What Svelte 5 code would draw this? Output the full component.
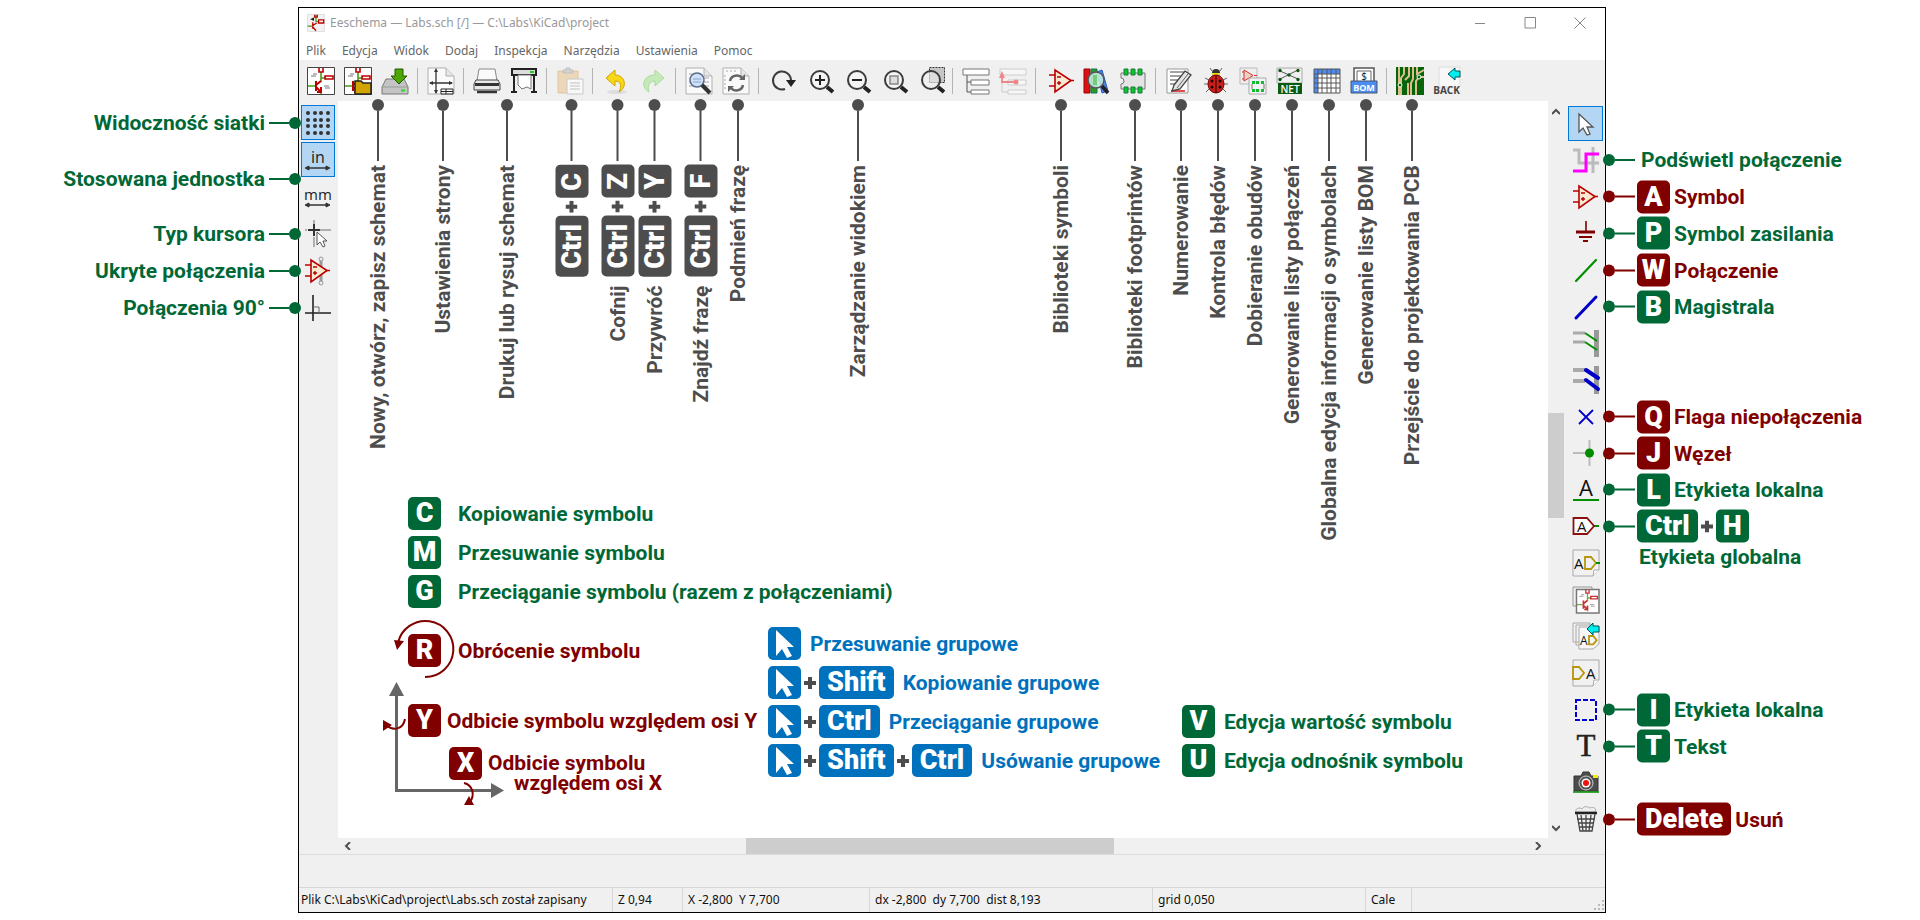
<script>
  const paper = '<path d="M1 1H19L27 9V27H1Z" fill="#fafafa" stroke="#b0b0b0"/><path d="M19 1V9H27" fill="#e6e6e6" stroke="#b0b0b0"/>';
  const circuit =
    '<path d="M14 5V15M14 11H19M1 19H8M14 23V27" fill="none" stroke="#4a9a1a" stroke-width="1.600"/>' +
    '<path d="M12 1V5H16V1M18 9H26V12H18Z" fill="none" stroke="#b00" stroke-width="1.600"/>' +
    '<path d="M9 14V24M9 18L14 14M9 20L13 24M10 25H14V20" fill="none" stroke="#b00" stroke-width="2"/>' +
    '<path d="M6 7H10M4 9H9M17 19H22M18 21H23" stroke="#777"/>';
  const lens = (cx = 15, cy = 13) =>
    `<circle cx="${cx}" cy="${cy}" r="9" fill="#f4f4f4" stroke="#3c3c3c" stroke-width="2"/><path d="M${cx + 7} ${cy + 7}L${cx + 13} ${cy + 12}" stroke="#222" stroke-width="4"/>`;
  const amp =
    '<path d="M1 8H7M1 19H7M22 13.500H26" stroke="#b00" stroke-width="1.600"/><path d="M7 3V25L23 13.500Z" fill="#f7ead0" stroke="#b00" stroke-width="1.600"/><path d="M9 10H13M9 16H13M11 14V18" stroke="#b00" stroke-width="1.400"/>';
  const plug = '<path d="M1 1H27V21L21 27H1Z" fill="#f1f1f1" stroke="#a9a9a9"/><path d="M27 21H22L21 27" fill="#fff" stroke="#a9a9a9"/>';
  const gate = (x, y, s = 1) =>
    `<path d="M${x} ${y}h${6 * s}l${5 * s} ${6 * s}l${-5 * s} ${6 * s}h${-6 * s}Z" fill="none" stroke="#b8960c" stroke-width="1.800"/>`;
  const letter = (x, y, size, t = 'A') =>
    `<text x="${x}" y="${y}" font-family="Open Sans, sans-serif" font-size="${size}" fill="#111">${t}</text>`;
  const arrow = '<path d="M1 22L5 20V24ZM26 22L22 20V24Z" fill="#333" stroke="#333"/><path d="M3 22H24" stroke="#333" stroke-width="1.500"/>';

  const icons = {
    new: '<path d="M.5.5H27.500V27.500H.5Z" fill="#fff" stroke="#444"/>' + circuit,
    open: '<path d="M.5.5H27.500V27.500H.5Z" fill="#fff" stroke="#444"/>' + circuit + '<path d="M11 27V14H17L19 16H27V27Z" fill="#d2a400" stroke="#222" stroke-width="1.500"/>',
    save: '<path d="M5 12H23L27 20V27H1V20Z" fill="#c4c4c4" stroke="#777"/><path d="M1 20H27" stroke="#999"/><path d="M20 23.500H24" stroke="#2d2" stroke-width="2"/><path d="M14 2H22V9H26L18 17L10 9H14Z" fill="#4ea604" stroke="#225a00"/>',
    page: paper + '<path d="M9 3V26M3 16H25" stroke="#333" stroke-width="1.300"/><path d="M9 1L7 5H11ZM9 27L7 23H11ZM2 16L6 14V18ZM26 16L22 14V18Z" fill="#333"/><path d="M14 22H26V27H14ZM19 22V27M14 24.500H26" fill="#fff" stroke="#222"/>',
    print: '<path d="M6 2H22L24 14H4Z" fill="#fafafa" stroke="#888"/><path d="M3 13H25L27 17V23H1V17Z" fill="#e8e8e8" stroke="#444"/><path d="M2 16H26V19H2Z" fill="#333"/><path d="M4 25H24" stroke="#333" stroke-width="2.500"/>',
    plot: '<path d="M2 2H26V8H2Z" fill="#ddd" stroke="#222" stroke-width="2"/><path d="M20 5H24" stroke="#2c2" stroke-width="2"/><path d="M8 8H21V22L17 20L12 22L8 18Z" fill="#fff" stroke="#777"/><path d="M4 8V25M24 8V25M1 25H7M21 25H27" stroke="#222" stroke-width="2"/>',
    paste: '<g opacity=".55"><path d="M2 4H22V26H2Z" fill="#e9c38b" stroke="#d6a35d"/><path d="M7 6V3H10V1H14V3H17V6Z" fill="#bbb" stroke="#999"/><path d="M11 12H27V27H11Z" fill="#fff" stroke="#aaa"/><path d="M14 16H24M14 19H24M14 22H24" stroke="#999"/></g>',
    undo: '<ellipse cx="15" cy="25" rx="10" ry="2" fill="#ddd"/><path d="M4 11L13 3V8C23 8 26 20 17 25C20 19 19 14 13 14V19Z" fill="#f6d816" stroke="#d0a400"/>',
    redo: '<g opacity=".55"><path d="M25 11L16 3V8C4 8 1 20 10 25C8 19 10 14 16 14V19Z" fill="#a3e58b" stroke="#6fcf52"/></g>',
    find: paper + '<path d="M4 7H16M4 11H24M4 15H24M4 19H24" stroke="#aaa"/><circle cx="12" cy="13" r="7" fill="#cfe0f7" stroke="#5a6c8c" stroke-width="1.500"/><path d="M8 12H16M8 15H16" stroke="#8aa3cf"/><path d="M17 18L25 26" stroke="#333" stroke-width="4"/>',
    replace: paper + '<path d="M4 4H16M3 8V24" stroke="#aaa" stroke-dasharray="2 2"/><path d="M8 14C9 8 17 7 20 11M21 18C20 24 12 25 9 21" fill="none" stroke="#666" stroke-width="2.500"/><path d="M17 13H23V7ZM12 19H6V25Z" fill="#666"/>',
    refresh: '<path d="M17 22A9 9 0 1 1 23 13" fill="none" stroke="#3c3c3c" stroke-width="2"/><path d="M18 13H28L23 20Z" fill="#222"/>',
    zoomIn: lens() + '<path d="M10 13H20M15 8V18" stroke="#222" stroke-width="2"/>',
    zoomOut: lens() + '<path d="M10 13H20" stroke="#222" stroke-width="2"/>',
    zoomFit: lens() + '<path d="M11 9H19V17H11Z" fill="#ddd" stroke="#888" stroke-width="1.500"/>',
    zoomArea: '<path d="M13.500.5H28.500V15.500H13.500Z" fill="#c6c6c6" stroke="#333" stroke-dasharray="2 1"/><circle cx="15" cy="13" r="9" fill="#eee" fill-opacity=".6" stroke="#3c3c3c" stroke-width="2"/><path d="M22 20L28 25" stroke="#222" stroke-width="4"/>',
    tree: '<path d="M5 8V25H9M5 15H9" fill="none" stroke="#555"/><path d="M1 2H27V8H1ZM9 13H27V18H9ZM9 23H27V27H9Z" fill="#fff" stroke="#777"/>',
    treeUp: '<g opacity=".5"><path d="M3 8V25H9M5 15H9" fill="none" stroke="#aaa"/><path d="M1 2H27V8H1ZM9 13H27V18H9ZM9 23H27V27H9Z" fill="#fff" stroke="#aaa"/><path d="M3 8V15H17" fill="none" stroke="#e22" stroke-width="1.800"/><path d="M0 11L3 4L6 11Z" fill="#e22"/><circle cx="17" cy="15" r="2.500" fill="#e22"/></g>',
    amp,
    symbols: '<g transform="translate(3 0)">' + amp + '</g>',
    library: '<path d="M2 2H8V26H2Z" fill="#d11" stroke="#900"/><path d="M9 2H15V26H9Z" fill="#2a9a1a" stroke="#176"/><path d="M15 5L20 3L26 24L20 26Z" fill="#4b86e8" stroke="#25b"/><circle cx="14" cy="13" r="8" fill="#c9efe4" fill-opacity=".85" stroke="#555" stroke-width="1.500"/><path d="M11 8H15V18H11Z" fill="#7c7"/><path d="M20 19L26 26" stroke="#222" stroke-width="3.500"/>',
    footprint: '<path d="M2 6H26V22H2V17A3 3 0 0 0 2 11Z" fill="#e4e4e4" stroke="#777"/><path d="M5 2H9V8H5ZM12 2H16V8H12ZM19 2H23V8H19ZM5 20H9V26H5ZM12 20H16V26H12ZM19 20H23V26H19Z" fill="#0c2" stroke="#274"/>',
    annotate: '<path d="M2 2H23V26H2Z" fill="#fff" stroke="#999"/><path d="M5 5H20M5 9H18M5 13H15M5 17H12" stroke="#444"/><path d="M6 24H20" stroke="#d11" stroke-width="1.500"/><path d="M9 18L20 4L26 8L15 22L7 24Z" fill="#e4e4e4" stroke="#444" stroke-width="1.300"/><path d="M12 21L23 7" stroke="#666"/>',
    bug: '<path d="M3 11L7 13M2 17H7M4 25L8 21M25 11L21 13M26 17H21M24 25L20 21M10 4L8 1M18 4L20 1" fill="none" stroke="#666"/><circle cx="14" cy="6" r="4" fill="#333"/><path d="M10 7H18" stroke="#dd2" stroke-width="2"/><ellipse cx="14" cy="17" rx="8" ry="9" fill="#c8201c" stroke="#700"/><path d="M14 9V26" stroke="#300"/><g fill="#200"><circle cx="10" cy="14" r="1.500"/><circle cx="18" cy="14" r="1.500"/><circle cx="10" cy="20" r="1.500"/><circle cx="18" cy="20" r="1.500"/></g>',
    assign: '<path d="M1 1H18V17H1Z" fill="#eee" stroke="#bbb"/><path d="M3 5H5M3 12H5M5 3V14L14 8.500Z" fill="#f2d0c0" stroke="#c33"/><path d="M15 8.500H18" stroke="#c33"/><path d="M10 11H27V27H10Z" fill="#f3f3f3" stroke="#aaa"/><path d="M13 14H16V17H13ZM17 14H20V17H17ZM22 14H25V17H22ZM13 22H16V25H13ZM17 22H20V25H17ZM22 22H25V25H22Z" fill="#1b3"/><path d="M13 17V22M25 17V22" stroke="#777"/>',
    net: '<path d="M1 1H26V16H1Z" fill="#f0f0f0" stroke="#aaa"/><path d="M4 4L22 12M22 3L4 12" stroke="#555"/><g fill="#151"><circle cx="4" cy="3.500" r="1.700"/><circle cx="22" cy="3.500" r="1.700"/><circle cx="13" cy="8" r="1.700"/><circle cx="4" cy="12.500" r="1.700"/><circle cx="22" cy="12.500" r="1.700"/></g><path d="M2 16H26V27H2Z" fill="#0a5c12"/><text x="14" y="25.500" text-anchor="middle" font-family="Open Sans, sans-serif" font-weight="600" font-size="10" fill="#fff">NET</text>',
    table: '<path d="M1 2H27V26H1Z" fill="#fff"/><path d="M1 2H27V7H5V26H1Z" fill="#4c8df5"/><path d="M1 2H27V26H1ZM5 2V26M9 2V26M14 2V26M18 2V26M23 2V26M1 7H27M1 11H27M1 16H27M1 21H27" fill="none" stroke="#555"/>',
    bom: '<path d="M4 1H24V16H4Z" fill="#fff" stroke="#555" stroke-width="1.500"/><path d="M7 4H21V16H7Z" fill="#fff" stroke="#666"/><text x="14" y="13" text-anchor="middle" font-family="Open Sans, sans-serif" font-size="10" fill="#111">$</text><path d="M1 14H27V26H1Z" fill="#4c8df5" stroke="#456"/><text x="14" y="24" text-anchor="middle" font-family="Open Sans, sans-serif" font-weight="700" font-size="9" fill="#fff">BOM</text>',
    pcb: '<path d="M0 0H28V28H0Z" fill="#06650a"/><path d="M3 0V28M8 0V7L5 11V28M13 0V9L9 13M12 16V28M17 0V12L15 16V28M21 0V7L28 3M28 10H23L20 14V28" fill="none" stroke="#dcbf8a" stroke-width="2"/><circle cx="4" cy="18" r="2" fill="#06650a" stroke="#fff"/><circle cx="23" cy="10" r="2" fill="#06650a" stroke="#fff"/>',
    back: '<path d="M6 0H27V20H6Z" fill="#f7f7f7" stroke="#ddd"/><path d="M15 7L22 1V4H27V10H22V13Z" fill="#0ee" stroke="#055"/><text x="13.500" y="27" text-anchor="middle" font-family="Open Sans, sans-serif" font-weight="700" font-size="10" fill="#444">BACK</text>',
    grid: '<g fill="#333">' + [4, 11, 17, 24].flatMap((y) => [4, 11, 17, 24].map((x) => `<circle cx="${x}" cy="${y}" r="2"/>`)).join('') + '</g>',
    inch: '<text x="14" y="17" text-anchor="middle" font-family="Open Sans, sans-serif" font-size="16" fill="#222">in</text>' + arrow,
    mm: '<text x="14" y="17" text-anchor="middle" font-family="Open Sans, sans-serif" font-size="15" fill="#222">mm</text>' + arrow,
    cursor: '<path d="M10 0V4M10 17V27M1 10H3M16 10H27" stroke="#999" stroke-width="1.500"/><path d="M10 4V16M4 10H16" stroke="#333" stroke-width="2"/><path d="M13 12V25L16 22L19 27L21 26L19 21H23Z" fill="#fff" stroke="#555"/>',
    hidden: '<path d="M17 3V25" stroke="#999" stroke-width="3"/><circle cx="17" cy="2" r="2" fill="#eee" stroke="#999"/><circle cx="17" cy="26" r="2" fill="#eee" stroke="#999"/>' + amp,
    right: '<path d="M9 1V27M1 19H27" stroke="#222" stroke-width="1.600"/><path d="M9 13H15V19" fill="none" stroke="#666"/>',
    pointer: '<path d="M7 4V22L11 18L15 25L18 24L15 17H21Z" fill="#fff" stroke="#555" stroke-width="1.300"/>',
    highlight: '<path d="M1 4H7V17H27M21 1V27" fill="none" stroke="#bbb" stroke-width="3"/><path d="M1 25H14V8H27" fill="none" stroke="#f0f" stroke-width="3"/>',
    power: '<path d="M14 2V13" stroke="#800000" stroke-width="1.600"/><path d="M4 13H23" stroke="#800000" stroke-width="3"/><path d="M7 18H20M11 22H16" stroke="#800000" stroke-width="2"/>',
    wire: '<path d="M4 25L24 4" stroke="#009000" stroke-width="2.200" stroke-linecap="round"/>',
    bus: '<path d="M4 25L24 4" stroke="#0000c8" stroke-width="3" stroke-linecap="round"/>',
    wireEntry: '<path d="M1 4H13M1 13H13" stroke="#aaa" stroke-width="3"/><path d="M24.500 1V28" stroke="#999" stroke-width="5"/><path d="M13 4L25 12M13 13L25 21" stroke="#009000" stroke-width="2"/>',
    busEntry: '<path d="M1 4H13M1 15H13" stroke="#aaa" stroke-width="4"/><path d="M24.500 0V28" stroke="#999" stroke-width="5"/><path d="M14 4L26 12M14 14L26 23" stroke="#0000c8" stroke-width="4" stroke-linecap="round"/>',
    noConnect: '<path d="M7 7L21 21M21 7L7 21" stroke="#0000c8" stroke-width="1.800"/>',
    junction: '<path d="M1 14H17M17.500 1V27" stroke="#bbb" stroke-width="2"/><circle cx="17.500" cy="14" r="4.500" fill="#008c00"/>',
    label: '<path d="M1 24H27" stroke="#009000" stroke-width="2"/>' + letter(7, 20, 22),
    global: '<path d="M20 14H27" stroke="#009000" stroke-width="2"/><path d="M1.500 6H15L22 14L15 22H1.500Z" fill="#fff" stroke="#8a1010" stroke-width="1.800"/>' + letter(5, 20, 15),
    hier: plug + gate(13, 8) + '<path d="M24 14H28" stroke="#009000" stroke-width="2"/>' + letter(2, 20, 15),
    sheet: '<path d="M1 1H20V20H1Z" fill="#eee" stroke="#999"/><path d="M4.500 3.500H27V27H4.500Z" fill="#fff" stroke="#777" stroke-width="1.500"/><g transform="translate(4 3) scale(.82)" opacity=".8">' + circuit + '</g>',
    sheetImport: '<path d="M1 1H18V20H1ZM4 3H21V23H4Z" fill="#f2f2f2" stroke="#aaa"/><path d="M7 5H27V22L21 27H7Z" fill="#f7f7f7" stroke="#aaa"/><path d="M15 7L21 1V4H27V10H21V13Z" fill="#0ee" stroke="#055"/>' + gate(17, 14, 0.7) + letter(8, 23, 12),
    sheetPin: plug + gate(1, 8) + letter(14, 20, 15),
    outline: '<path d="M4 4H24V24H4Z" fill="none" stroke="#0000d0" stroke-width="2" stroke-dasharray="5 2"/>',
    text: '<text x="14" y="24" text-anchor="middle" font-family="Liberation Serif, serif" font-size="31" fill="#222" stroke="#222" stroke-width=".5">T</text>',
    image: '<path d="M2 7H9L11 3H17L19 7H26V22H2Z" fill="#4c4c4c" stroke="#333"/><path d="M21 6H26V9H21Z" fill="#ee0"/><circle cx="14" cy="14" r="7" fill="#555" stroke="#ccc"/><circle cx="14" cy="14" r="4.500" fill="#fff"/><circle cx="14" cy="14" r="3" fill="#e11"/><path d="M1 23H27" stroke="#009000" stroke-width="1.500"/>',
    trash: '<path d="M4 7C3 3 8 2 10 4C13 0 16 2 18 3C23 1 25 5 23 7Z" fill="#eee" stroke="#aaa"/><path d="M3 8H25" stroke="#222" stroke-width="2.500"/><path d="M5 9L8 26H20L23 9M9 10L11 26M14 10V26M19 10L17 26M5 14H23M6 18H22M7 22H21" fill="none" stroke="#444" stroke-width="1.300"/>'
  };

  const draw = (name) => `<svg width="28" height="28" viewBox="0 0 28 28" overflow="visible" font-weight="400" aria-hidden="true">${icons[name]}</svg>`;

  const menus = ['Plik', 'Edycja', 'Widok', 'Dodaj', 'Inspekcja', 'Narzędzia', 'Ustawienia', 'Pomoc'];

  const top = [
    { icon: 'new' }, { icon: 'open' }, { icon: 'save', text: 'Nowy, otwórz, zapisz schemat', between: true }, null,
    { icon: 'page', text: 'Ustawienia strony' }, null,
    { icon: 'print' }, { icon: 'plot', text: 'Drukuj lub rysuj schemat', between: true }, null,
    { icon: 'paste', keys: ['Ctrl', 'C'] }, null,
    { icon: 'undo', keys: ['Ctrl', 'Z'], text: 'Cofnij' }, { icon: 'redo', keys: ['Ctrl', 'Y'], text: 'Przywróć' }, null,
    { icon: 'find', keys: ['Ctrl', 'F'], text: 'Znajdź frazę' }, { icon: 'replace', text: 'Podmień frazę' }, null,
    { icon: 'refresh' }, { icon: 'zoomIn' }, { icon: 'zoomOut', text: 'Zarządzanie widokiem' }, { icon: 'zoomFit' }, { icon: 'zoomArea' }, null,
    { icon: 'tree' }, { icon: 'treeUp' }, null,
    { icon: 'symbols', text: 'Biblioteki symboli' }, { icon: 'library' }, { icon: 'footprint', text: 'Biblioteki footprintów' }, null,
    { icon: 'annotate', text: 'Numerowanie' }, { icon: 'bug', text: 'Kontrola błędów' }, { icon: 'assign', text: 'Dobieranie obudów' },
    { icon: 'net', text: 'Generowanie listy połączeń' }, { icon: 'table', text: 'Globalna edycja informacji o symbolach' }, { icon: 'bom', text: 'Generowanie listy BOM' }, null,
    { icon: 'pcb', text: 'Przejście do projektowania PCB' }, { icon: 'back' }
  ];

  const left = [
    { icon: 'grid', text: 'Widoczność siatki', on: true },
    { icon: 'inch', on: true },
    { icon: 'mm', text: 'Stosowana jednostka', between: true },
    { icon: 'cursor', text: 'Typ kursora' },
    { icon: 'hidden', text: 'Ukryte połączenia' },
    { icon: 'right', text: 'Połączenia 90°' }
  ];

  const right = [
    { icon: 'pointer', on: true },
    { icon: 'highlight', text: 'Podświetl połączenie', tone: 'green' },
    { icon: 'amp', keys: ['A'], text: 'Symbol', tone: 'red' },
    { icon: 'power', keys: ['P'], text: 'Symbol zasilania', tone: 'green' },
    { icon: 'wire', keys: ['W'], text: 'Połączenie', tone: 'red' },
    { icon: 'bus', keys: ['B'], text: 'Magistrala', tone: 'green' },
    { icon: 'wireEntry' }, { icon: 'busEntry' },
    { icon: 'noConnect', keys: ['Q'], text: 'Flaga niepołączenia', tone: 'red' },
    { icon: 'junction', keys: ['J'], text: 'Węzeł', tone: 'red' },
    { icon: 'label', keys: ['L'], text: 'Etykieta lokalna', tone: 'green' },
    { icon: 'global', keys: ['Ctrl', 'H'], below: 'Etykieta globalna', tone: 'green' },
    { icon: 'hier' }, { icon: 'sheet' }, { icon: 'sheetImport' }, { icon: 'sheetPin' },
    { icon: 'outline', keys: ['I'], text: 'Etykieta lokalna', tone: 'green' },
    { icon: 'text', keys: ['T'], text: 'Tekst', tone: 'green' },
    { icon: 'image' },
    { icon: 'trash', keys: ['Delete'], text: 'Usuń', tone: 'red' }
  ];

  const copy = [['C', 'Kopiowanie symbolu'], ['M', 'Przesuwanie symbolu'], ['G', 'Przeciąganie symbolu (razem z połączeniami)']];
  const group = [
    [[], 'Przesuwanie grupowe'],
    [['Shift'], 'Kopiowanie grupowe'],
    [['Ctrl'], 'Przeciąganie grupowe'],
    [['Shift', 'Ctrl'], 'Usówanie grupowe']
  ];
  const edit = [['V', 'Edycja wartość symbolu'], ['U', 'Edycja odnośnik symbolu']];
</script>

{#snippet plus()}
  <svg width="12" height="12" viewBox="0 0 12 12" role="img" aria-label="plus"><path d="M6 0V12M0 6H12" stroke="#4d4d4d" stroke-width="4" /></svg>
{/snippet}

{#snippet key(k)}<kbd class:word={k.length > 1}>{k}</kbd>{/snippet}

{#snippet chord(keys)}
  <span class="chord">
    {#each keys as k, i}
      {#if i}{@render plus()}{/if}{@render key(k)}
    {/each}
  </span>
{/snippet}

<div class="page">
  <main class="window">
    <header class="title">
      <svg width="18" height="18" viewBox="0 0 28 28" aria-hidden="true"><rect x=".5" y=".5" width="27" height="27" rx="2" fill="#f2f2f2" stroke="#ccc" /><path d="M14 1V12H18M1 19H8" stroke="#4a9a1a" stroke-width="2" fill="none" /><path d="M12 1V5H16V1M18 9H26V14H18ZM9 13V23M9 18L15 14M9 20L14 26" stroke="#b00" stroke-width="2" fill="none" /><path d="M5 8L11 5V11Z" fill="#222" /></svg>
      <h1>Eeschema — Labs.sch [/] — C:\Labs\KiCad\project</h1>
      <div class="controls">
        <button aria-label="Minimalizuj"><svg width="12" height="12" viewBox="0 0 12 12"><path d="M1 6.500H11" stroke="#888" /></svg></button>
        <button aria-label="Maksymalizuj"><svg width="12" height="12" viewBox="0 0 12 12"><path d="M1 .5H11.500V11H1Z" fill="none" stroke="#888" /></svg></button>
        <button aria-label="Zamknij"><svg width="12" height="12" viewBox="0 0 12 12"><path d="M.5.5L11.500 11.500M11.500.5L.5 11.500" stroke="#888" /></svg></button>
      </div>
    </header>

    <nav class="menu">
      {#each menus as m}<button>{m}</button>{/each}
    </nav>

    <div class="toolbar top">
      {#each top as t}
        {#if t}
          <div class="tool">
            <button aria-label={t.text ?? t.icon}>{@html draw(t.icon)}</button>
            {#if t.text || t.keys}
              <div class="callout down" class:between={t.between}>
                <i class="dot"></i><i class="line"></i>
                <div class="upright">
                  {#if t.text}<span>{t.text}</span>{/if}
                  {#if t.keys}{@render chord(t.keys)}{/if}
                </div>
              </div>
            {/if}
          </div>
        {:else}
          <i class="sep"></i>
        {/if}
      {/each}
    </div>

    <div class="body">
      <div class="toolbar side">
        {#each left as t}
          <div class="tool">
            <button class:on={t.on} aria-label={t.text ?? t.icon}>{@html draw(t.icon)}</button>
            {#if t.text}
              <div class="callout west green" class:between={t.between}><span>{t.text}</span><i class="line"></i><i class="dot"></i></div>
            {/if}
          </div>
        {/each}
      </div>

      <div class="view">
        <section class="canvas">
          <div class="col">
            <svg class="axes" width="140" height="200" viewBox="0 0 140 200" aria-hidden="true">
              <path d="M18.500 80V182.500H116" fill="none" stroke="#666" stroke-width="3" />
              <path d="M18.500 74L26 88H11ZM126 182.500L113 175V190Z" fill="#666" />
              <g fill="none" stroke="#800000" stroke-width="2">
                <path d="M47 69A28 28 0 1 0 20 35" />
                <path d="M27 111C25 122 15 123 8 117" />
                <path d="M86 175C95 177 97 187 92 194" />
              </g>
              <path d="M16 32L26 33L19 42ZM5 112V123L14 117ZM86 197L91 188L96 197Z" fill="#800000" />
            </svg>
            <div class="list green">
              {#each copy as [k, text]}<div class="entry wide">{@render key(k)}<span>{text}</span></div>{/each}
            </div>
            <div class="red rotate">
              <div class="entry wide">{@render key('R')}<span>Obrócenie symbolu</span></div>
              <div class="entry flip-y">{@render key('Y')}<span>Odbicie symbolu względem osi Y</span></div>
              <div class="entry flip-x">{@render key('X')}<p>Odbicie symbolu<br /><span class="second">względem osi X</span></p></div>
            </div>
          </div>
          <div class="col list blue">
            {#each group as [keys, text]}
              <div class="entry">
                <span class="chord">
                  <kbd class="mouse"><svg width="20" height="28" viewBox="0 0 20 28" role="img" aria-label="Mysz"><path d="M1 0V26L7 19L12 28L17 26L12 17H19Z" fill="#fff" /></svg></kbd>
                  {#each keys as k}{@render plus()}{@render key(k)}{/each}
                </span>
                <span>{text}</span>
              </div>
            {/each}
          </div>
          <div class="col list green">
            {#each edit as [k, text]}<div class="entry">{@render key(k)}<span>{text}</span></div>{/each}
          </div>
        </section>
        <div class="scroll vertical">
          <svg width="8" height="8" viewBox="0 0 8 8"><path d="M0 6L4 2L8 6" /></svg>
          <i class="thumb"></i>
          <svg width="8" height="8" viewBox="0 0 8 8"><path d="M0 2L4 6L8 2" /></svg>
        </div>
        <div class="scroll horizontal">
          <svg width="8" height="8" viewBox="0 0 8 8"><path d="M6 0L2 4L6 8" /></svg>
          <i class="thumb"></i>
          <svg width="8" height="8" viewBox="0 0 8 8"><path d="M2 0L6 4L2 8" /></svg>
        </div>
      </div>

      <div class="toolbar side spread">
        {#each right as t}
          <div class="tool">
            <button class:on={t.on} aria-label={t.text ?? t.below ?? t.icon}>{@html draw(t.icon)}</button>
            {#if t.tone}
              <div class="callout east {t.tone}">
                <i class="dot"></i><i class="line"></i>
                {#if t.keys}{@render chord(t.keys)}{/if}
                {#if t.text}<span class="name">{t.text}</span>{/if}
                {#if t.below}<span class="below">{t.below}</span>{/if}
              </div>
            {/if}
          </div>
        {/each}
      </div>
    </div>

    <div class="messages"></div>

    <footer class="status">
      <span>Plik C:\Labs\KiCad\project\Labs.sch został zapisany</span>
      <span>Z 0,94</span>
      <span>X -2,800&nbsp; Y 7,700</span>
      <span>dx -2,800&nbsp; dy 7,700&nbsp; dist 8,193</span>
      <span>grid 0,050</span>
      <span>Cale</span>
      <span class="grip"><svg width="12" height="12" viewBox="0 0 12 12" aria-hidden="true"><path d="M9 1H11M5 5H7M9 5H11M1 9H3M5 9H7M9 9H11" stroke="#bbb" stroke-width="2" /></svg></span>
    </footer>
  </main>
</div>

<style>
  :global(body) { margin: 0; background: #fff; }
  .page {
    display: grid;
    grid-template-columns: minmax(0, 1fr);
    box-sizing: border-box;
    min-height: 100vh;
    padding: 7px 314px 7px 298px;
    overflow: hidden;
    font: 700 21px/24px Roboto, sans-serif;
    color: #4d4d4d;
  }
  button { display: flex; align-items: center; justify-content: center; margin: 0; padding: 0; border: 0; background: none; font: inherit; color: inherit; }
  svg { display: block; flex: none; }
  i { display: block; flex: none; }
  p { margin: 0; line-height: 20px; }

  .window { display: flex; flex-direction: column; border: 1px solid #000; background: #f0f0f0; }
  .title, .menu, .status { font: 400 12px/16px "Noto Sans", "Open Sans", sans-serif; }
  .title { display: flex; align-items: center; gap: 5px; height: 30px; padding-left: 8px; background: #fff; color: #999; }
  h1 { margin: 0; font: inherit; }
  .controls { display: flex; margin-left: auto; }
  .controls button { width: 50px; height: 30px; }
  .menu { display: flex; gap: 16px; height: 18px; padding: 4px 0 0 7px; background: #fff; color: #666; }

  .toolbar { display: flex; background: #f0f0f0; }
  .tool { position: relative; display: flex; flex: none; }
  .top { height: 41px; padding-left: 3px; }
  .top .tool { width: 37px; }
  .top button { width: 100%; }
  .sep { width: 1px; height: 26px; margin: 8px 4px; background: #b4b4b4; }
  .side { flex: none; flex-direction: column; gap: 2px; padding: 4px 3px 17px 2px; }
  .side button { width: 34px; height: 35px; box-sizing: border-box; }
  .spread { gap: 0; justify-content: space-between; padding: 5px 2px 17px 4px; }
  .spread button { width: 35px; }
  .side .on { border: 1px solid #0078d7; background: #b3d6f4; }

  .callout { position: absolute; z-index: 1; display: flex; align-items: center; white-space: nowrap; }
  .dot { width: 12px; height: 12px; border-radius: 50%; background: currentColor; }
  .line { width: 20px; height: 2px; background: currentColor; }
  .down { top: 39px; left: calc(50% + 2px); flex-direction: column; transform: translateX(-50%); }
  .down.between { left: 2px; }
  .down .line { width: 2px; height: 50px; margin-bottom: 4px; }
  .upright { display: flex; align-items: center; gap: 9px; writing-mode: vertical-rl; transform: rotate(180deg); }
  .west { right: 100%; top: 50%; transform: translateY(-50%); }
  .west.between { top: 0; }
  .west .line { margin-left: 4px; }
  .east { left: 100%; top: 50%; transform: translateY(-50%); }
  .east .line { margin-right: 2px; }
  .name { margin-left: 4px; }
  .below { position: absolute; left: 36px; top: 35px; }

  .green { color: #006837; }
  .red { color: #800000; }
  .blue { color: #0071bc; }
  .chord { display: flex; align-items: center; gap: 3px; }
  kbd {
    box-sizing: border-box;
    flex: none;
    inline-size: 33px;
    block-size: 33px;
    border-radius: 5px;
    background: #4d4d4d;
    font: 900 27px/33px Roboto, sans-serif;
    text-align: center;
    -webkit-text-fill-color: #fff;
  }
  .word { inline-size: auto; padding-inline: 8px; }
  .green kbd, .red kbd, .blue kbd { background: currentColor; }
  .mouse { display: flex; align-items: center; justify-content: center; }

  .body { display: flex; flex: 1; border-bottom: 1px solid #dcdcdc; }
  .view { display: grid; flex: 1; grid-template-columns: minmax(0, 1fr) 16px; grid-template-rows: 1fr 16px; }
  .canvas {
    display: grid;
    grid-template-columns: 360px 414px auto;
    align-items: end;
    padding: 396px 0 58px 70px;
    background: #fff;
    white-space: nowrap;
  }
  .col { position: relative; min-width: 0; }
  .list { display: flex; flex-direction: column; gap: 6px; }
  .col.list { padding-bottom: 3px; }
  .entry { display: flex; align-items: center; gap: 9px; }
  .entry.wide { gap: 17px; }
  .rotate { padding-top: 26px; }
  .entry.flip-y { margin-top: 37px; gap: 6px; }
  .entry.flip-x { height: 33px; margin: 10px 0 0 41px; gap: 6px; align-items: flex-start; }
  .flip-x p { padding-top: 6px; }
  .second { padding-left: 26px; }
  .axes { position: absolute; left: -30px; bottom: -28px; }

  .scroll { display: flex; align-items: center; }
  .scroll path { fill: none; stroke: #505050; stroke-width: 2; }
  .thumb { background: #cdcdcd; }
  .vertical { flex-direction: column; padding: 7px 0 6px; }
  .vertical .thumb { width: 16px; height: 105px; margin: 297px 0 auto; }
  .horizontal { display: grid; grid-template-columns: 8px 391fr 366fr 417fr 8px; padding: 0 6px; }
  .horizontal .thumb { grid-column: 3; height: 16px; }
  .horizontal svg:last-child { grid-column: 5; }

  .messages { height: 32px; border-bottom: 1px solid #d7d7d7; }
  .status { display: grid; grid-template-columns: 313px 70px 187px 283px 213px 46px 1fr; height: 24px; color: #111; }
  .status span { padding: 4px 0 0 5px; border-left: 1px solid #d7d7d7; white-space: nowrap; }
  .status span:first-child { padding-left: 2px; border: 0; }
  .status .grip { display: flex; align-items: flex-end; justify-content: flex-end; }
</style>
